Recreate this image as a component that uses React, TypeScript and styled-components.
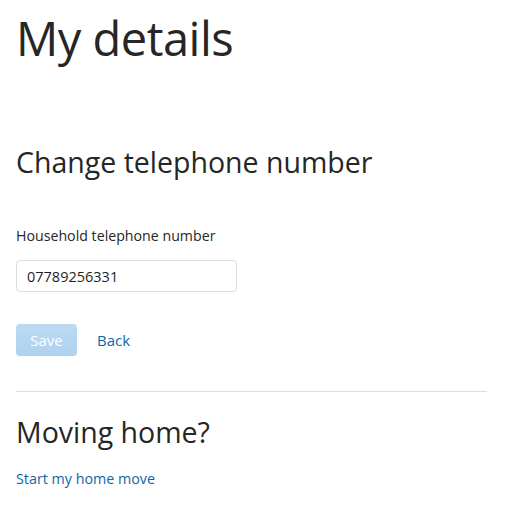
import React from "react";
import styled, { createGlobalStyle } from "styled-components";

const Global = createGlobalStyle`
  html, body { margin: 0; padding: 0; background: #fff; }
  body { font-family: "Open Sans", "Liberation Sans", sans-serif; color: #262626; }
`;

const Page = styled.main`
  padding: 0 20px 0 16px;
  display: flex;
  flex-direction: column;
`;

const Title = styled.h1`
  margin: 6px 0 0 0;
  font-size: 47px;
  font-weight: 400;
  line-height: 64px;
  letter-spacing: -0.5px;
`;

const Section = styled.section`
  display: flex;
  flex-direction: column;
`;

const Heading = styled.h2<{ $top: number }>`
  margin: ${(p) => p.$top}px 0 0 0;
  font-size: 28.5px;
  font-weight: 400;
  line-height: 36px;
`;

const Label = styled.label`
  margin-top: 46px;
  font-size: 14.2px;
  line-height: 20px;
`;

const Input = styled.input`
  margin-top: 14px;
  box-sizing: border-box;
  width: 221px;
  height: 32px;
  border: 1px solid #dcdcdc;
  border-radius: 4px;
  padding: 0 10px;
  font-family: inherit;
  font-size: 14.5px;
  color: #1f1f1f;
  outline: none;
`;

const Actions = styled.div`
  margin-top: 32px;
  display: flex;
  align-items: center;
  gap: 20px;
`;

const SaveButton = styled.button`
  box-sizing: border-box;
  width: 61px;
  height: 32px;
  border: none;
  border-radius: 4px;
  background: linear-gradient(#bcdaf2, #aed1ee);
  color: #fff;
  font-family: inherit;
  font-size: 15px;
  padding: 0;
`;

const Link = styled.a<{ $size?: number }>`
  color: #0d66a8;
  font-size: ${(p) => p.$size ?? 15}px;
  text-decoration: none;
`;

const Divider = styled.hr`
  margin: 35px 0 0 0;
  border: none;
  border-top: 1px solid #dedede;
`;

const LinkRow = styled.div`
  margin-top: 18px;
  line-height: 20px;
`;

export default function App() {
  return (
    <>
      <Global />
      <Page>
        <Title>My details</Title>
        <Section>
          <Heading $top={74}>Change telephone number</Heading>
          <Label htmlFor="tel">Household telephone number</Label>
          <Input id="tel" defaultValue="07789256331" />
          <Actions>
            <SaveButton disabled>Save</SaveButton>
            <Link href="#">Back</Link>
          </Actions>
        </Section>
        <Divider />
        <Section>
          <Heading $top={22}>Moving home?</Heading>
          <LinkRow>
            <Link href="#" $size={14.3}>Start my home move</Link>
          </LinkRow>
        </Section>
      </Page>
    </>
  );
}
